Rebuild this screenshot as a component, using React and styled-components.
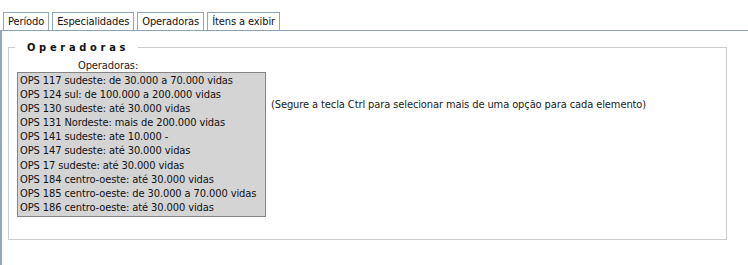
import styled, { createGlobalStyle } from "styled-components";

const GlobalStyle = createGlobalStyle`
  html, body {
    margin: 0;
    padding: 0;
    background: #fff;
  }
  body {
    font-family: Tahoma, "DejaVu Sans Condensed", "Liberation Sans", sans-serif;
    font-size: 11px;
    letter-spacing: -0.1px;
    color: #1a1a1a;
  }
`;

const Page = styled.div`
  width: 748px;
  height: 265px;
  overflow: hidden;
  display: flex;
  flex-direction: column;
`;

const TabBar = styled.div`
  display: flex;
  gap: 3px;
  padding: 12px 0 0 3px;
`;

const Tab = styled.div`
  height: 17px;
  line-height: 17px;
  padding: 0 4px 0 4px;
  border: 1px solid #8ea9bd;
  border-bottom: none;
  background: #fff;
  color: #111;
  white-space: nowrap;
`;

const Panel = styled.div`
  flex: 1;
  border-top: 1px solid #86a3b8;
  border-left: 2px solid #8ea9bd;
  padding: 10px 21px 0 6px;
`;

const Fieldset = styled.fieldset`
  margin: 0;
  padding: 5px 8px 22px 8px;
  border: 1px solid #cdcdcd;
`;

const Legend = styled.legend`
  margin-left: -2px;
  padding: 0 9px 0 12px;
  font-weight: bold;
  letter-spacing: 3.7px;
  line-height: 13px;
  color: #111;
`;

const Layout = styled.div`
  display: grid;
  grid-template-columns: auto 1fr;
  column-gap: 5px;
`;

const FieldLabel = styled.div`
  grid-column: 1;
  line-height: 13px;
  padding-left: 61px;
`;

const ListBox = styled.div`
  grid-column: 1;
  width: 245px;
  border: 1px solid #858585;
  background: #d4d4d4;
  padding: 1px 0 1px 2px;
`;

const Option = styled.div`
  line-height: 14.1px;
  white-space: nowrap;
  color: #111;
`;

const Hint = styled.div`
  grid-column: 2;
  grid-row: 2;
  padding-top: 26px;
  white-space: nowrap;
`;

const tabs = ["Período", "Especialidades", "Operadoras", "Ítens a exibir"];

const operadoras = [
  "OPS 117 sudeste: de 30.000 a 70.000 vidas",
  "OPS 124 sul: de 100.000 a 200.000 vidas",
  "OPS 130 sudeste: até 30.000 vidas",
  "OPS 131 Nordeste: mais de 200.000 vidas",
  "OPS 141 sudeste: ate 10.000 -",
  "OPS 147 sudeste: até 30.000 vidas",
  "OPS 17 sudeste: até 30.000 vidas",
  "OPS 184 centro-oeste: até 30.000 vidas",
  "OPS 185 centro-oeste: de 30.000 a 70.000 vidas",
  "OPS 186 centro-oeste: até 30.000 vidas",
];

export default function App() {
  return (
    <Page>
      <GlobalStyle />
      <TabBar>
        {tabs.map((t) => (
          <Tab key={t}>{t}</Tab>
        ))}
      </TabBar>
      <Panel>
        <Fieldset>
          <Legend>Operadoras</Legend>
          <Layout>
            <FieldLabel>Operadoras:</FieldLabel>
            <ListBox role="listbox" aria-multiselectable="true">
              {operadoras.map((o) => (
                <Option key={o} role="option">
                  {o}
                </Option>
              ))}
            </ListBox>
            <Hint>
              (Segure a tecla Ctrl para selecionar mais de uma opção para cada
              elemento)
            </Hint>
          </Layout>
        </Fieldset>
      </Panel>
    </Page>
  );
}
